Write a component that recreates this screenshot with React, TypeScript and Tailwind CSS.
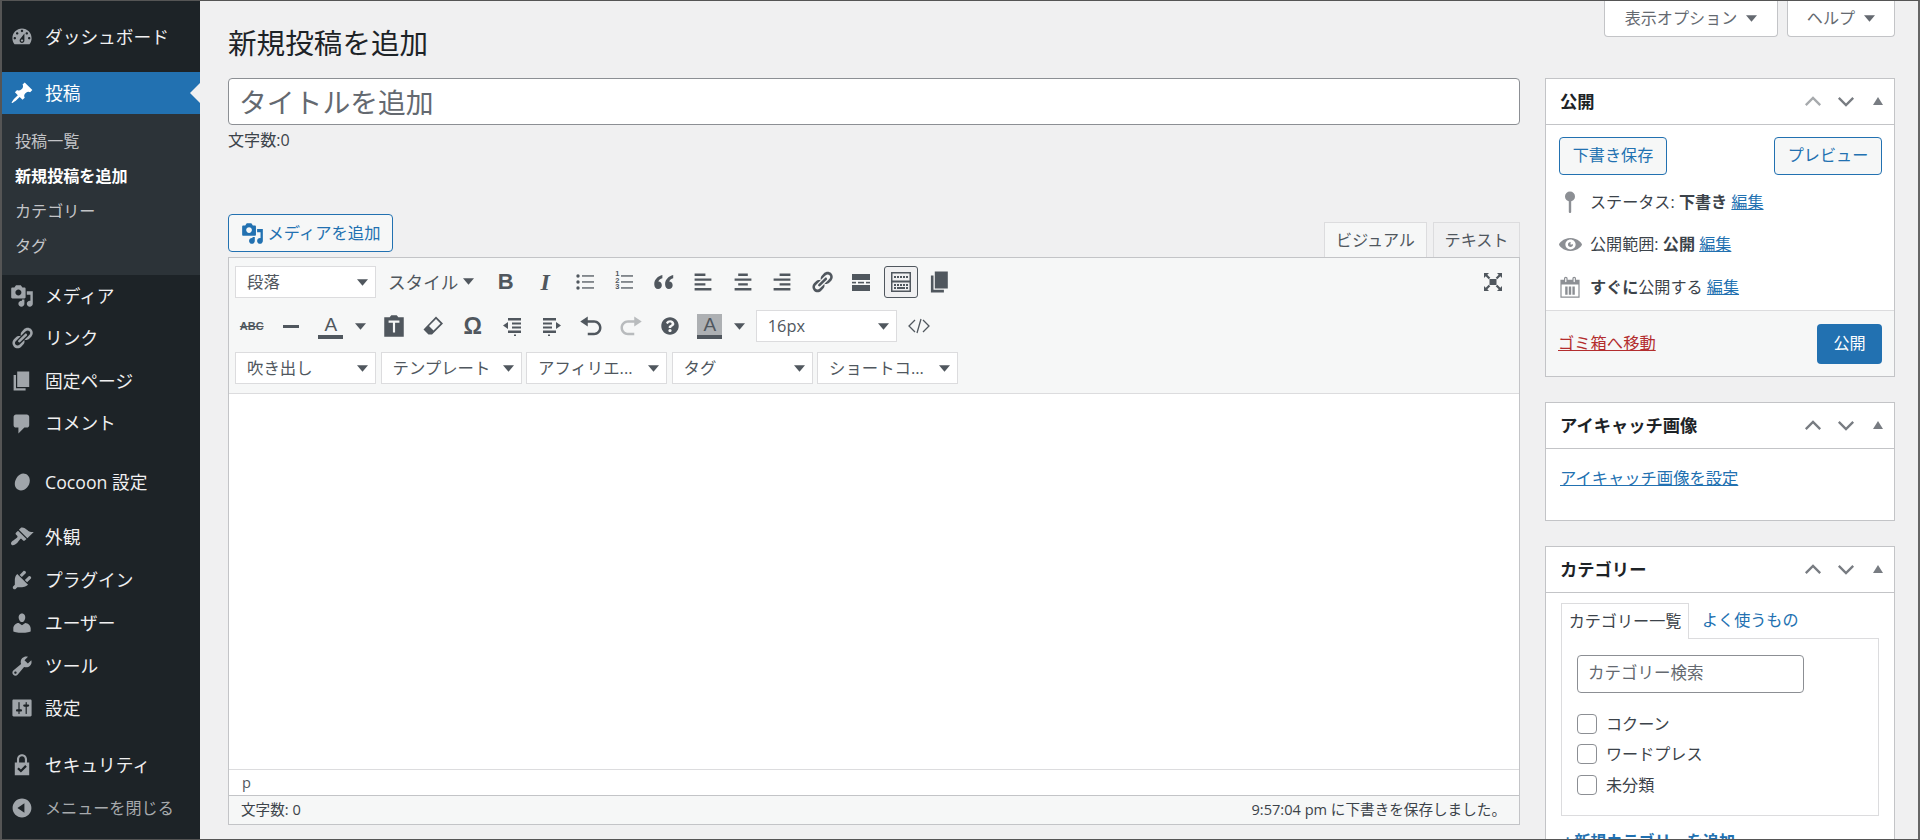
import type { ReactNode } from "react";
import { FaQuestionCircle } from "react-icons/fa";

const FONT = "font-['Open_Sans','Noto_Sans_CJK_JP',sans-serif]";

const P = {
  dashboard:
    "M3.76 16h12.48c1.1-1.37 1.76-3.11 1.76-5 0-4.42-3.58-8-8-8s-8 3.58-8 8c0 1.89.66 3.63 1.76 5zM10 4c.55 0 1 .45 1 1s-.45 1-1 1-1-.45-1-1 .45-1 1-1zM6 6c.55 0 1 .45 1 1s-.45 1-1 1-1-.45-1-1 .45-1 1-1zm8 0c.55 0 1 .45 1 1s-.45 1-1 1-1-.45-1-1 .45-1 1-1zm-5.37 5.55L12 7v6c0 1.1-.9 2-2 2s-2-.9-2-2c0-.57.24-1.08.63-1.45zM4 10c.55 0 1 .45 1 1s-.45 1-1 1-1-.45-1-1 .45-1 1-1zm12 0c.55 0 1 .45 1 1s-.45 1-1 1-1-.45-1-1 .45-1 1-1zm-5 3c0-.55-.45-1-1-1s-1 .45-1 1 .45 1 1 1 1-.45 1-1z",
  post: "M10.44 3.02l1.82-1.82 6.36 6.35-1.83 1.82c-1.05-.68-2.48-.57-3.41.36l-.75.75c-.92.93-1.04 2.35-.35 3.41l-1.83 1.82-2.41-2.41-2.8 2.79c-.42.42-3.38 2.71-3.8 2.29s1.86-3.39 2.28-3.81l2.79-2.79L4.1 9.36l1.83-1.82c1.05.69 2.48.57 3.4-.36l.75-.75c.93-.92 1.05-2.35.36-3.41z",
  media:
    "M13 11V4c0-.55-.45-1-1-1h-1.67L9 1H5L3.67 3H2c-.55 0-1 .45-1 1v7c0 .55.45 1 1 1h10c.55 0 1-.45 1-1zM7 4.5c1.38 0 2.5 1.12 2.5 2.5S8.38 9.5 7 9.5 4.5 8.38 4.5 7 5.62 4.5 7 4.5zM14 6h5v10.5c0 1.38-1.12 2.5-2.5 2.5S14 17.88 14 16.5s1.12-2.5 2.5-2.5c.17 0 .34.02.5.05V9h-3V6zm-4 8.05V13h2v3.5c0 1.38-1.12 2.5-2.5 2.5S7 17.88 7 16.5 8.12 14 9.5 14c.17 0 .34.02.5.05z",
  links:
    "M17.74 2.76c1.68 1.69 1.68 4.41 0 6.1l-1.53 1.52c-1.12 1.12-2.7 1.47-4.14 1.09l2.62-2.61.76-.77.76-.76c.84-.84.84-2.2 0-3.04-.84-.85-2.2-.85-3.04 0l-.77.76-3.38 3.38c-.37-1.44-.02-3.02 1.1-4.14l1.52-1.53c1.69-1.68 4.42-1.68 6.1 0zM8.59 13.43l5.34-5.34c.42-.42.42-1.1 0-1.52-.44-.43-1.13-.39-1.53 0l-5.33 5.34c-.42.42-.42 1.1 0 1.52.44.43 1.13.39 1.52 0zm-.76 2.29l4.14-4.15c.38 1.44.03 3.02-1.09 4.14l-1.52 1.53c-1.69 1.68-4.41 1.68-6.1 0-1.68-1.68-1.68-4.42 0-6.1l1.53-1.52c1.12-1.12 2.7-1.47 4.14-1.1l-4.14 4.15c-.85.84-.85 2.2 0 3.05.84.84 2.2.84 3.04 0z",
  page: "M6 15V2h10v13H6zm-1 1h8v2H3V5h2v11z",
  comments:
    "M5 2h9c1.1 0 2 .9 2 2v7c0 1.1-.9 2-2 2h-2l-5 5v-5H5c-1.1 0-2-.9-2-2V4c0-1.1.9-2 2-2z",
  cocoon: "M11 3c3.200 0 5.500 2.300 5.500 5.700 0 4.600-3.600 8.300-7.400 8.300-3 0-5.100-2.300-5.100-5.300C4 7.500 7.400 3 11 3z",
  appearance:
    "M14.48 11.06L7.41 3.99l1.5-1.5c.5-.56 2.3-.47 3.51.32 1.21.8 1.43 1.28 2.91 2.1 1.18.64 2.45 1.26 4.45.85zm-.71.71L6.7 4.7 4.93 6.47c-.39.39-.39 1.02 0 1.41l1.06 1.06c.39.39.39 1.03 0 1.42-.6.6-1.43 1.11-2.21 1.69-.35.26-.7.53-1.01.84C1.43 13.23.18 15.33 1.32 16.47c1.14 1.14 3.24-.11 4.58-1.44.31-.31.58-.66.84-1.01.58-.78 1.09-1.61 1.69-2.21.39-.39 1.02-.39 1.41 0l1.06 1.06c.39.39 1.02.39 1.41 0z",
  plugins:
    "M13.11 4.36L9.87 7.6 8 5.73l3.24-3.24c.35-.34 1.05-.2 1.56.32.52.51.66 1.21.31 1.55zm-8 1.77l.91-1.12 9.01 9.01-1.19.84c-.71.71-2.63 1.16-3.82 1.16H6.14L4.9 17.26c-.59.59-1.54.59-2.12 0-.59-.58-.59-1.53 0-2.12l1.24-1.24v-3.88c0-1.13.4-3.19 1.09-3.89zm7.26 3.97l3.24-3.24c.34-.35 1.04-.21 1.55.31.52.51.66 1.21.31 1.55l-3.24 3.25z",
  users:
    "M10 9.25c-2.27 0-2.73-3.44-2.73-3.44C7 4.02 7.82 2 9.97 2c2.16 0 2.98 2.02 2.71 3.81 0 0-.41 3.44-2.68 3.44zm0 2.57L12.72 10c2.39 0 4.52 2.33 4.52 4.53v2.49s-3.65 1.13-7.24 1.13c-3.65 0-7.24-1.13-7.24-1.13v-2.49c0-2.25 1.94-4.48 4.47-4.48z",
  tools:
    "M16.68 9.77c-1.34 1.34-3.3 1.67-4.95.99l-5.41 6.52c-.99.99-2.59.99-3.58 0s-.99-2.59 0-3.57l6.52-5.42c-.68-1.65-.35-3.61.99-4.95 1.28-1.28 3.12-1.62 4.72-1.06l-2.89 2.89 2.82 2.82 2.86-2.87c.53 1.58.18 3.39-1.08 4.65zM3.81 16.21c.4.39 1.04.39 1.43 0 .4-.4.4-1.04 0-1.43-.39-.4-1.03-.4-1.43 0-.39.39-.39 1.03 0 1.43z",
  settings:
    "M18 16V4c0-.55-.45-1-1-1H3c-.55 0-1 .45-1 1v12c0 .55.45 1 1 1h14c.55 0 1-.45 1-1zM8 11h1c.55 0 1 .45 1 1s-.45 1-1 1H8v1.5c0 .28-.22.5-.5.5s-.5-.22-.5-.5V13H6c-.55 0-1-.45-1-1s.45-1 1-1h1V5.5c0-.28.22-.5.5-.5s.5.22.5.5V11zm5-2h-1c-.55 0-1-.45-1-1s.45-1 1-1h1V5.5c0-.28.22-.5.5-.5s.5.22.5.5V7h1c.55 0 1 .45 1 1s-.45 1-1 1h-1v5.5c0 .28-.22.5-.5.5s-.5-.22-.5-.5V9z",
  security:
    "M10 1C7.600 1 5.800 2.900 5.800 5.300V8H4v10.500h12V8h-1.800V5.300C14.200 2.900 12.400 1 10 1zM7.600 8V5.300c0-1.400 1.100-2.500 2.400-2.500s2.400 1.100 2.400 2.500V8zm1.500 8.300L6 13.300l1.300-1.300 1.800 1.700 3.600-3.600 1.300 1.300z",
  collapse:
    "M10 2.160c4.330 0 7.840 3.510 7.840 7.840s-3.510 7.840-7.840 7.840S2.160 14.330 2.160 10 5.710 2.160 10 2.160zm2 11.720V6.120L6.180 9.970z",
  visibility:
    "M10 4.400C3.439 4.400 0 9.232 0 10c0 .766 3.439 5.600 10 5.600 6.560 0 10-4.834 10-5.600 0-.768-3.440-5.600-10-5.600zm0 9.907c-2.455 0-4.445-1.928-4.445-4.307S7.545 5.691 10 5.691s4.444 1.930 4.444 4.309-1.989 4.307-4.444 4.307zM10 10c-.407-.447.663-2.154 0-2.154-1.228 0-2.223.965-2.223 2.154s.995 2.154 2.223 2.154c1.227 0 2.223-.965 2.223-2.154 0-.547-1.877.379-2.223 0z",
  calendar:
    "M15 4h3v15H2V4h3V3c0-.41.15-.76.44-1.060.29-.29.65-.44 1.060-.44s.77.15 1.060.44c.29.3.44.65.44 1.060v1h4V3c0-.41.15-.76.44-1.060.29-.29.65-.44 1.060-.44s.77.15 1.060.44c.29.3.44.65.44 1.060v1zM6 3v2.500c0 .14.05.26.15.36.09.09.21.14.35.14s.26-.05.35-.14c.1-.1.15-.22.15-.36V3c0-.14-.05-.26-.15-.35-.09-.1-.21-.15-.35-.15s-.26.05-.35.15c-.1.09-.15.21-.15.35zm7 0v2.500c0 .14.05.26.14.36.1.09.22.14.36.14s.26-.05.36-.14c.09-.1.14-.22.14-.36V3c0-.14-.05-.26-.14-.35-.1-.1-.22-.15-.36-.15s-.26.05-.36.15c-.09.09-.14.21-.14.35zm4 15V8H3v10h14zM6 9.500h2v7H6zM9 9.500h2v7H9zM12 9.500h2v7h-2z",
  alignLeft: "M12 5V3H3v2h9zm5 4V7H3v2h14zm-5 4v-2H3v2h9zm5 4v-2H3v2h14z",
  alignCenter: "M14 5V3H6v2h8zm3 4V7H3v2h14zm-3 4v-2H6v2h8zm3 4v-2H3v2h14z",
  alignRight: "M17 5V3H8v2h9zm0 4V7H3v2h14zm0 4v-2H8v2h9zm0 4v-2H3v2h14z",
  undo: "M12 5H7V2L1 6l6 4V7h5c2.200 0 4 1.800 4 4s-1.800 4-4 4H7v2h5c3.300 0 6-2.700 6-6s-2.700-6-6-6z",
  redo: "M8 5h5V2l6 4-6 4V7H8c-2.200 0-4 1.800-4 4s1.800 4 4 4h5v2H8c-3.300 0-6-2.700-6-6s2.700-6 6-6z",
};

const Dash = ({ d, className }: { d: string; className: string }) => (
  <svg viewBox="0 0 20 20" className={className} fill="currentColor">
    <path d={d} />
  </svg>
);

const Caret = ({ className = "text-[#50575e]" }: { className?: string }) => (
  <svg viewBox="0 0 10 6" className={`h-[7px] w-[11px] shrink-0 ${className}`} fill="currentColor">
    <path d="M0 0h10L5 6z" />
  </svg>
);

const MenuItem = ({
  icon,
  label,
  className = "h-[42.6px]",
}: {
  icon: string;
  label: string;
  className?: string;
}) => (
  <div className={`flex items-center pl-[8px] text-[17.7px] text-[#f0f0f1] ${className}`}>
    <Dash d={icon} className="mr-[11px] h-[24px] w-[24px] shrink-0 text-[#a0a5aa]" />
    {label}
  </div>
);

const Sidebar = () => (
  <aside className="flex w-[198px] shrink-0 flex-col bg-[#1d2327] pt-[15px]">
    <MenuItem icon={P.dashboard} label="ダッシュボード" />
    <div className="relative mt-[13px] flex h-[42px] items-center bg-[#2271b1] pl-[8px] pt-[1px] text-[17.7px] text-white">
      <Dash d={P.post} className="mr-[11px] h-[24px] w-[24px] shrink-0 text-white" />
      投稿
      <span className="absolute right-0 top-1/2 h-0 w-0 -translate-y-1/2 border-y-[10px] border-r-[10px] border-y-transparent border-r-[#f0f0f1]" />
    </div>
    <div className="flex h-[161px] flex-col bg-[#2c3338] pt-[10px] text-[16.1px] text-[#c3c4c7]">
      <div className="flex h-[35px] items-center pl-[13px]">投稿一覧</div>
      <div className="flex h-[35px] items-center pl-[13px] font-bold text-white">新規投稿を追加</div>
      <div className="flex h-[35px] items-center pl-[13px]">カテゴリー</div>
      <div className="flex h-[35px] items-center pl-[13px]">タグ</div>
    </div>
    <MenuItem icon={P.media} label="メディア" />
    <MenuItem icon={P.links} label="リンク" />
    <MenuItem icon={P.page} label="固定ページ" />
    <MenuItem icon={P.comments} label="コメント" />
    <MenuItem icon={P.cocoon} label="Cocoon 設定" className="mt-[15.6px] h-[42.6px]" />
    <MenuItem icon={P.appearance} label="外観" className="mt-[12.4px] h-[43px]" />
    <MenuItem icon={P.plugins} label="プラグイン" className="h-[43px]" />
    <MenuItem icon={P.users} label="ユーザー" className="h-[43px]" />
    <MenuItem icon={P.tools} label="ツール" className="h-[42.6px]" />
    <MenuItem icon={P.settings} label="設定" className="h-[42.6px]" />
    <MenuItem icon={P.security} label="セキュリティ" className="mt-[14px] h-[42.6px]" />
    <div className="flex h-[42.6px] items-center pl-[8px] text-[16.1px] text-[#a7aaad]">
      <Dash d={P.collapse} className="mr-[11px] h-[24px] w-[24px] shrink-0 text-[#a0a5aa]" />
      メニューを閉じる
    </div>
  </aside>
);

const Select = ({ label, className = "" }: { label: string; className?: string }) => (
  <div
    className={`flex h-[32px] w-[141px] shrink-0 items-center justify-between border border-[#dcdcde] bg-white pl-[11px] pr-[7px] text-[16.4px] text-[#50575e] ${className}`}
  >
    <span>{label}</span>
    <Caret />
  </div>
);

const Btn = ({ children, className = "" }: { children: ReactNode; className?: string }) => (
  <div className={`flex h-[34px] w-[39.5px] shrink-0 items-center justify-center text-[#50575e] ${className}`}>
    {children}
  </div>
);

const Ico = ({ children, size = 24 }: { children: ReactNode; size?: number }) => (
  <svg viewBox="0 0 24 24" width={size} height={size} fill="currentColor">
    {children}
  </svg>
);

const ToolbarRow1 = () => (
  <div className="flex h-[34px] items-center pl-[6px] pr-[6px]">
    <Select label="段落" />
    <div className="flex w-[110px] shrink-0 items-center pl-[12px] text-[17.6px] text-[#50575e]">
      スタイル
      <Caret className="ml-[5px] text-[#50575e]" />
    </div>
    <Btn>
      <span className="font-['Liberation_Sans',sans-serif] text-[22px] font-bold leading-none">B</span>
    </Btn>
    <Btn>
      <span className="font-['Liberation_Serif',serif] text-[24px] font-bold italic leading-none">I</span>
    </Btn>
    <Btn>
      <Ico>
        <circle cx="5" cy="6" r="1.700" />
        <circle cx="5" cy="12" r="1.700" />
        <circle cx="5" cy="18" r="1.700" />
        <rect x="9" y="5.300" width="12" height="1.300" />
        <rect x="9" y="11.300" width="12" height="1.300" />
        <rect x="9" y="17.300" width="12" height="1.300" />
      </Ico>
    </Btn>
    <Btn>
      <div className="relative h-[24px] w-[24px]">
        <Ico>
          <rect x="9" y="5.300" width="12" height="1.300" />
          <rect x="9" y="11.300" width="12" height="1.300" />
          <rect x="9" y="17.300" width="12" height="1.300" />
        </Ico>
        <span className="absolute left-[3px] top-[1px] flex flex-col font-['Liberation_Sans',sans-serif] text-[7.500px] font-bold leading-[6.500px]">
          <span>1</span>
          <span>2</span>
          <span>3</span>
        </span>
      </div>
    </Btn>
    <Btn>
      <Ico size={26}>
        <path d="M10.500 5.500C6.500 6.500 3 9.500 3 14c0 2.500 1.500 4.500 3.500 4.500S10 17 10 15s-1.300-3.300-3.200-3.400c.4-1.300 1.800-2.500 3.700-3zM20.500 5.500c-4 1-7.500 4-7.500 8.500 0 2.500 1.500 4.500 3.500 4.500S20 17 20 15s-1.300-3.300-3.200-3.400c.4-1.300 1.800-2.500 3.700-3z" />
      </Ico>
    </Btn>
    <Btn>
      <Dash d={P.alignLeft} className="h-[24px] w-[24px]" />
    </Btn>
    <Btn>
      <Dash d={P.alignCenter} className="h-[24px] w-[24px]" />
    </Btn>
    <Btn>
      <Dash d={P.alignRight} className="h-[24px] w-[24px]" />
    </Btn>
    <Btn>
      <Dash d={P.links} className="h-[24px] w-[24px]" />
    </Btn>
    <Btn>
      <Ico>
        <rect x="3" y="4" width="18" height="6" />
        <rect x="3" y="15" width="18" height="6" />
        <rect x="3" y="11.800" width="4" height="1.600" />
        <rect x="9" y="11.800" width="6" height="1.600" />
        <rect x="17" y="11.800" width="4" height="1.600" />
      </Ico>
    </Btn>
    <div className="mx-[2.750px] flex h-[32px] w-[34px] shrink-0 items-center justify-center rounded-[3px] border border-[#50575e] bg-[#f0f0f1] text-[#50575e]">
      <Ico>
        <path fillRule="evenodd" d="M2 2h20v20H2zM3.500 3.500v7h17v-7zM3.500 12.500v8h17v-8z" />
        <path d="M5 6h2v2H5zM8 6h2v2H8zM11 6h2v2h-2zM14 6h2v2h-2zM17 6h2v2h-2zM5 14h2v2H5zM8 14h2v2H8zM11 14h2v2h-2zM14 14h2v2h-2zM17 14h2v2h-2zM5 17h2v2H5zM8 17h8v2H8zM17 17h2v2h-2z" />
      </Ico>
    </div>
    <Btn>
      <Dash d={P.page} className="h-[26px] w-[26px]" />
    </Btn>
    <div className="flex-1" />
    <Btn>
      <Ico>
        <rect x="8.500" y="9" width="7" height="6" />
        <path d="M3 3h5L6.300 4.700l3 3-1.600 1.600-3-3L3 8zM21 3v5l-1.700-1.700-3 3-1.600-1.600 3-3L16 3zM3 21v-5l1.700 1.700 3-3 1.600 1.600-3 3L8 21zM21 21h-5l1.700-1.700-3-3 1.600-1.600 3 3L21 16z" />
      </Ico>
    </Btn>
  </div>
);

const ToolbarRow2 = () => (
  <div className="flex h-[34px] items-center pl-[3px]">
    <Btn>
      <span className="font-['Liberation_Sans',sans-serif] text-[11px] font-bold leading-none line-through">ABC</span>
    </Btn>
    <Btn>
      <span className="h-[3px] w-[16px] bg-[#50575e]" />
    </Btn>
    <Btn>
      <div className="flex h-[25px] w-[25px] flex-col items-center justify-end">
        <span className="font-['Liberation_Sans',sans-serif] text-[19px] leading-[20px]">A</span>
        <span className="h-[4px] w-full bg-[#50575e]" />
      </div>
    </Btn>
    <div className="flex w-[23.5px] shrink-0 pl-[4px]">
      <Caret />
    </div>
    <Btn>
      <Ico size={26}>
        <path fillRule="evenodd" d="M9.500 2h5L16 4h5v18H3V4h5zM7 7v2h4v9h2V9h4V7z" />
      </Ico>
    </Btn>
    <Btn>
      <Ico>
        <path
          fillRule="evenodd"
          d="M15 2.500L22 9.500 11 20.500H7.500L2.500 15.500zM15 5L8 12l4.500 4.500 7-7z"
        />
      </Ico>
    </Btn>
    <Btn>
      <span className="font-['Liberation_Sans',sans-serif] text-[23px] font-bold leading-none">Ω</span>
    </Btn>
    <Btn>
      <Ico>
        <path d="M8 4h13v2.500H8zM12 8.500h9v2h-9zM12 12.500h9v2h-9zM8 16.500h13V19H8zM3 11.500l5-3.500v7zM14 20.500h2V22h-2z" />
      </Ico>
    </Btn>
    <Btn>
      <Ico>
        <path d="M3 4h13v2.500H3zM3 8.500h9v2H3zM3 12.500h9v2H3zM3 16.500h13V19H3zM21 11.500l-5-3.500v7zM8 20.500h2V22H8z" />
      </Ico>
    </Btn>
    <Btn>
      <Dash d={P.undo} className="h-[25px] w-[25px]" />
    </Btn>
    <Btn className="text-[#b8bbbd]">
      <Dash d={P.redo} className="h-[25px] w-[25px]" />
    </Btn>
    <Btn>
      <FaQuestionCircle className="h-[18px] w-[18px]" />
    </Btn>
    <Btn>
      <div className="flex h-[25px] w-[25px] flex-col items-center justify-end bg-[#adb0b3]">
        <span className="font-['Liberation_Sans',sans-serif] text-[19px] leading-[20px]">A</span>
        <span className="h-[4px] w-full bg-[#50575e]" />
      </div>
    </Btn>
    <div className="flex w-[19px] shrink-0 pl-[4px]">
      <Caret />
    </div>
    <Select label="16px" className="ml-[7.250px]" />
    <Btn className="ml-[2px] text-[#7e8993]">
      <svg viewBox="0 0 24 24" className="h-[24px] w-[24px]" fill="none" stroke="currentColor" strokeWidth="1.300">
        <path d="M8 6l-6 6 6 6M16 6l6 6-6 6M14 5l-4 14" />
      </svg>
    </Btn>
  </div>
);

const Editor = () => (
  <div className="flex h-[568px] flex-col border border-[#c3c4c7] bg-white">
    <div className="flex h-[136px] shrink-0 flex-col border-b border-[#dcdcde] bg-[#f6f7f7] pt-[7px]">
      <ToolbarRow1 />
      <div className="mt-[10px]">
        <ToolbarRow2 />
      </div>
      <div className="mt-[9px] flex gap-[4.500px] pl-[6px]">
        <Select label="吹き出し" />
        <Select label="テンプレート" />
        <Select label="アフィリエ..." />
        <Select label="タグ" />
        <Select label="ショートコ..." />
      </div>
    </div>
    <div className="flex-1" />
    <div className="flex h-[26px] shrink-0 items-center border-t border-[#dcdcde] pl-[13px] text-[14.600px] text-[#50575e]">
      p
    </div>
    <div className="flex h-[29px] shrink-0 items-center justify-between border-t border-[#c3c4c7] bg-[#f6f7f7] pl-[12px] pr-[13px] text-[14.600px] text-[#3c434a]">
      <span>文字数: 0</span>
      <span>9:57:04 pm に下書きを保存しました。</span>
    </div>
  </div>
);

const Chevrons = ({ dimUp = false }: { dimUp?: boolean }) => (
  <div className="flex items-center text-[#787c82]">
    <svg viewBox="0 0 20 12" className={`h-[11px] w-[18px] ${dimUp ? "text-[#a7aaad]" : ""}`} fill="none" stroke="currentColor" strokeWidth="2.600">
      <path d="M2 10l8-8 8 8" />
    </svg>
    <svg viewBox="0 0 20 12" className="ml-[15px] h-[11px] w-[18px]" fill="none" stroke="currentColor" strokeWidth="2.600">
      <path d="M2 2l8 8 8-8" />
    </svg>
    <svg viewBox="0 0 10 8" className="ml-[18px] h-[8px] w-[10px]" fill="currentColor">
      <path d="M5 0l5 8H0z" />
    </svg>
  </div>
);

const BoxHead = ({ title, dimUp }: { title: string; dimUp?: boolean }) => (
  <div className="flex h-[45.5px] shrink-0 items-center justify-between border-b border-[#c3c4c7] pl-[14px] pr-[11px] text-[17.300px] font-bold text-[#1d2327]">
    <span className="pt-[2px]">{title}</span>
    <Chevrons dimUp={dimUp} />
  </div>
);

const SecondaryButton = ({ label }: { label: string }) => (
  <div className="flex h-[38px] w-[108px] items-center justify-center rounded-[4px] border border-[#2271b1] bg-[#f6f7f7] text-[16.100px] text-[#2271b1]">
    {label}
  </div>
);

const EditLink = () => <a className="text-[#2271b1] underline">編集</a>;

const StatusRow = ({ icon, children }: { icon: ReactNode; children: ReactNode }) => (
  <div className="flex h-[42.5px] items-center">
    <div className="mr-[8px] flex w-[24px] shrink-0 justify-center text-[#8c8f94]">{icon}</div>
    <div className="whitespace-nowrap">{children}</div>
  </div>
);

const PublishBox = () => (
  <section className="flex h-[299px] shrink-0 flex-col border border-[#c3c4c7] bg-white">
    <BoxHead title="公開" dimUp />
    <div className="flex justify-between pl-[13px] pr-[12px] pt-[12px]">
      <SecondaryButton label="下書き保存" />
      <SecondaryButton label="プレビュー" />
    </div>
    <div className="flex flex-col pl-[12px] pt-[6px] text-[16.100px] text-[#3c434a]">
      <StatusRow
        icon={
          <svg viewBox="0 0 12 22" className="h-[22px] w-[12px]" fill="currentColor">
            <circle cx="6" cy="5.500" r="5" />
            <rect x="4.800" y="9" width="2.400" height="13" rx="1" />
          </svg>
        }
      >
        ステータス: <b>下書き</b> <EditLink />
      </StatusRow>
      <StatusRow icon={<Dash d={P.visibility} className="h-[23px] w-[23px]" />}>
        公開範囲: <b>公開</b> <EditLink />
      </StatusRow>
      <StatusRow icon={<Dash d={P.calendar} className="h-[24px] w-[24px]" />}>
        <b>すぐに</b>公開する <EditLink />
      </StatusRow>
    </div>
    <div className="mt-auto flex h-[66px] items-center justify-between border-t border-[#dcdcde] bg-[#f6f7f7] pl-[12px] pr-[12px]">
      <a className="text-[16.300px] text-[#b32d2e] underline">ゴミ箱へ移動</a>
      <div className="flex h-[40px] w-[65px] items-center justify-center rounded-[4px] bg-[#2271b1] text-[16.100px] text-white">
        公開
      </div>
    </div>
  </section>
);

const Check = ({ label }: { label: string }) => (
  <div className="flex h-[30.500px] items-center text-[16.100px] text-[#3c434a]">
    <span className="mr-[9px] h-[20px] w-[20px] rounded-[4px] border border-[#8c8f94] bg-white" />
    {label}
  </div>
);

const CategoryBox = () => (
  <section className="flex h-[320px] shrink-0 flex-col border border-[#c3c4c7] bg-white">
    <BoxHead title="カテゴリー" />
    <div className="flex flex-col px-[15px] pt-[10px] text-[16.100px]">
      <div className="flex h-[35px]">
        <div className="z-10 -mb-px flex w-[128px] items-center justify-center border border-b-0 border-[#dcdcde] bg-white text-[#3c434a]">
          カテゴリー一覧
        </div>
        <div className="flex items-center pl-[13px] text-[#2271b1]">よく使うもの</div>
      </div>
      <div className="flex h-[178px] flex-col border border-[#dcdcde] pl-[15px] pt-[16px]">
        <div className="mb-[16px] flex h-[38px] w-[227px] items-center rounded-[4px] border border-[#8c8f94] pl-[10px] text-[16.500px] text-[#646970]">
          カテゴリー検索
        </div>
        <Check label="コクーン" />
        <Check label="ワードプレス" />
        <Check label="未分類" />
      </div>
      <div className="mt-[13px] flex items-center pl-[2px] font-bold text-[#2271b1] underline">
        <span className="mr-[2px]">+</span>新規カテゴリーを追加
      </div>
    </div>
  </section>
);

const RightColumn = () => (
  <div className="flex w-[350px] shrink-0 flex-col">
    <div className="flex h-[37px] shrink-0 justify-end gap-[9px] pb-[1px] text-[16.100px] text-[#646970]">
      <div className="flex w-[174px] items-center justify-center gap-[9px] rounded-b-[4px] border border-t-0 border-[#c3c4c7] bg-white">
        表示オプション
        <Caret className="text-[#646970]" />
      </div>
      <div className="flex w-[108px] items-center justify-center gap-[9px] rounded-b-[4px] border border-t-0 border-[#c3c4c7] bg-white">
        ヘルプ
        <Caret className="text-[#646970]" />
      </div>
    </div>
    <div className="mt-[40px] flex flex-col gap-[25px]">
      <PublishBox />
      <section className="flex h-[119px] shrink-0 flex-col border border-[#c3c4c7] bg-white">
        <BoxHead title="アイキャッチ画像" />
        <a className="pl-[14px] pt-[17px] text-[16.300px] text-[#2271b1] underline">アイキャッチ画像を設定</a>
      </section>
      <CategoryBox />
    </div>
  </div>
);

const MainColumn = () => (
  <div className="flex w-[1292px] shrink-0 flex-col">
    <h1 className="flex h-[77px] shrink-0 items-center pt-[8px] text-[28.600px] font-normal text-[#1d2327]">
      新規投稿を追加
    </h1>
    <div className="flex h-[47px] items-center rounded-[4px] border border-[#8c8f94] bg-white pl-[10px] pt-[2px] text-[27.800px] text-[#646970]">
      タイトルを追加
    </div>
    <div className="mt-[4px] text-[16.100px] leading-[22px] text-[#3c434a]">文字数:0</div>
    <div className="mt-[63px] flex h-[43px] items-start justify-between">
      <div className="flex h-[38px] w-[165px] items-center justify-center gap-[4px] rounded-[4px] border border-[#2271b1] bg-[#f6f7f7] text-[16.300px] text-[#2271b1]">
        <Dash d={P.media} className="h-[23px] w-[23px]" />
        メディアを追加
      </div>
      <div className="mt-[8px] flex h-[35px] gap-[6px] text-[16.100px] text-[#50575e]">
        <div className="z-10 flex w-[103px] items-center justify-center border border-b-0 border-[#dcdcde] bg-[#f6f7f7]">
          ビジュアル
        </div>
        <div className="flex w-[87px] items-center justify-center border border-b-0 border-[#dcdcde] bg-[#f0f0f1]">
          テキスト
        </div>
      </div>
    </div>
    <Editor />
  </div>
);

export default function App() {
  return (
    <div
      className={`flex h-[840px] w-[1920px] overflow-hidden border-y border-y-[#555] border-l-2 border-r-2 border-l-[#555] border-r-[#666] bg-[#f0f0f1] leading-normal ${FONT}`}
    >
      <Sidebar />
      <main className="flex min-w-0 flex-1 gap-[25px] pl-[28px]">
        <MainColumn />
        <RightColumn />
      </main>
    </div>
  );
}
